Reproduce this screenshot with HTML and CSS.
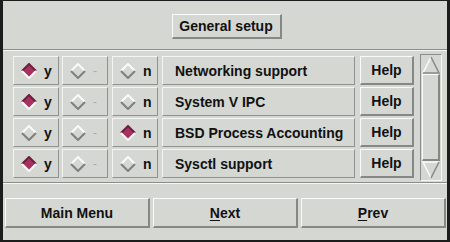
FILE: index.html
```html
<!DOCTYPE html>
<html lang="en">
<head>
    <meta charset="UTF-8">
    <title>General setup</title>
    <link rel="stylesheet" href="styles.css">
</head>
<body>
    <div class="window">
        <div class="header">
            <button class="btn title-btn">General setup</button>
        </div>
        <div class="separator"></div>
        <div class="main">
            <div class="rows">
                <div class="row">
                    <div class="cell opt"><svg class="dia" viewBox="0 0 16 16"><polygon class="on" points="8,1 15,8 8,15 1,8"/><polyline class="on-top" points="1,8 8,1 15,8"/><polyline class="on-bot" points="1,8 8,15 15,8"/></svg><span>y</span></div>
                    <div class="cell opt dim"><svg class="dia" viewBox="0 0 16 16"><polyline class="off-top" points="1,8 8,1 15,8"/><polyline class="off-bot" points="1,8 8,15 15,8"/></svg><span>-</span></div>
                    <div class="cell opt"><svg class="dia" viewBox="0 0 16 16"><polyline class="off-top" points="1,8 8,1 15,8"/><polyline class="off-bot" points="1,8 8,15 15,8"/></svg><span>n</span></div>
                    <div class="cell label">Networking support</div>
                    <button class="btn help">Help</button>
                </div>
                <div class="row">
                    <div class="cell opt"><svg class="dia" viewBox="0 0 16 16"><polygon class="on" points="8,1 15,8 8,15 1,8"/><polyline class="on-top" points="1,8 8,1 15,8"/><polyline class="on-bot" points="1,8 8,15 15,8"/></svg><span>y</span></div>
                    <div class="cell opt dim"><svg class="dia" viewBox="0 0 16 16"><polyline class="off-top" points="1,8 8,1 15,8"/><polyline class="off-bot" points="1,8 8,15 15,8"/></svg><span>-</span></div>
                    <div class="cell opt"><svg class="dia" viewBox="0 0 16 16"><polyline class="off-top" points="1,8 8,1 15,8"/><polyline class="off-bot" points="1,8 8,15 15,8"/></svg><span>n</span></div>
                    <div class="cell label">System V IPC</div>
                    <button class="btn help">Help</button>
                </div>
                <div class="row">
                    <div class="cell opt"><svg class="dia" viewBox="0 0 16 16"><polyline class="off-top" points="1,8 8,1 15,8"/><polyline class="off-bot" points="1,8 8,15 15,8"/></svg><span>y</span></div>
                    <div class="cell opt dim"><svg class="dia" viewBox="0 0 16 16"><polyline class="off-top" points="1,8 8,1 15,8"/><polyline class="off-bot" points="1,8 8,15 15,8"/></svg><span>-</span></div>
                    <div class="cell opt"><svg class="dia" viewBox="0 0 16 16"><polygon class="on" points="8,1 15,8 8,15 1,8"/><polyline class="on-top" points="1,8 8,1 15,8"/><polyline class="on-bot" points="1,8 8,15 15,8"/></svg><span>n</span></div>
                    <div class="cell label">BSD Process Accounting</div>
                    <button class="btn help">Help</button>
                </div>
                <div class="row">
                    <div class="cell opt"><svg class="dia" viewBox="0 0 16 16"><polygon class="on" points="8,1 15,8 8,15 1,8"/><polyline class="on-top" points="1,8 8,1 15,8"/><polyline class="on-bot" points="1,8 8,15 15,8"/></svg><span>y</span></div>
                    <div class="cell opt dim"><svg class="dia" viewBox="0 0 16 16"><polyline class="off-top" points="1,8 8,1 15,8"/><polyline class="off-bot" points="1,8 8,15 15,8"/></svg><span>-</span></div>
                    <div class="cell opt"><svg class="dia" viewBox="0 0 16 16"><polyline class="off-top" points="1,8 8,1 15,8"/><polyline class="off-bot" points="1,8 8,15 15,8"/></svg><span>n</span></div>
                    <div class="cell label">Sysctl support</div>
                    <button class="btn help">Help</button>
                </div>
            </div>
            <div class="scrollbar">
                <svg class="arrow" viewBox="0 0 18 18"><polygon points="9,1 17,17 1,17" fill="#d4d7d2"/><polyline points="1,17 9,1" stroke="#fafafa" stroke-width="1.5" fill="none"/><polyline points="9,1 17,17 1,17" stroke="#888" stroke-width="1.5" fill="none"/></svg>
                <div class="slider"></div>
                <svg class="arrow" viewBox="0 0 18 18"><polygon points="1,1 17,1 9,17" fill="#d4d7d2"/><polyline points="9,17 1,1 17,1" stroke="#fafafa" stroke-width="1.5" fill="none"/><polyline points="17,1 9,17" stroke="#888" stroke-width="1.5" fill="none"/></svg>
            </div>
        </div>
        <div class="separator"></div>
        <div class="footer">
            <button class="btn nav">Main Menu</button>
            <button class="btn nav"><u>N</u>ext</button>
            <button class="btn nav"><u>P</u>rev</button>
        </div>
    </div>
</body>
</html>
```

FILE: styles.css
```css
body {
    margin: 0;
    background-color: #d4d7d2;
    font-family: "Liberation Sans", Arial, sans-serif;
}
.window {
    width: 450px;
    height: 242px;
    box-sizing: border-box;
    border-style: solid;
    border-color: #1c1c1c;
    border-width: 1px 3px 2px 3px;
    background-color: #d4d7d2;
    display: flex;
    flex-direction: column;
}
.btn {
    font-family: "Liberation Sans", Arial, sans-serif;
    font-weight: bold;
    font-size: 14px;
    color: #111;
    background-color: #d4d7d2;
    border-style: solid;
    border-width: 1px 2px 2px 1px;
    border-color: #fafafa #858885 #858885 #fafafa;
    padding: 0;
    margin: 0;
}
.header {
    height: 48px;
    display: flex;
    justify-content: center;
    align-items: center;
    padding-left: 3px;
}
.title-btn {
    width: 110px;
    height: 25px;
    margin-top: 2px;
}
.separator {
    height: 0;
    border-top: 1px solid #8a8d8a;
    border-bottom: 1px solid #f6f6f6;
}
.main {
    display: flex;
    padding: 3px 7px 0 10px;
    height: 131px;
    box-sizing: border-box;
}
.rows {
    display: flex;
    flex-direction: column;
    gap: 2px;
    padding-top: 2px;
}
.row {
    display: flex;
    height: 29px;
}
.cell {
    box-sizing: border-box;
    height: 29px;
    border-style: solid;
    border-width: 1px;
    border-color: #f4f4f4 #8f928f #8f928f #f4f4f4;
    display: flex;
    align-items: center;
    font-weight: bold;
    font-size: 14px;
    color: #111;
}
.opt {
    width: 46px;
    margin-right: 3px;
    padding-left: 7px;
    gap: 7px;
}
.opt:nth-child(2) {
    margin-right: 4px;
}
.opt:nth-child(3) {
    margin-right: 4px;
}
.dim span {
    color: #a8aba8;
    font-weight: normal;
    font-size: 12px;
}
.dia {
    width: 16px;
    height: 16px;
}
.dia .on {
    fill: #a8325f;
}
.dia .on-top {
    fill: none;
    stroke: #6e1f3e;
    stroke-width: 2;
}
.dia .on-bot {
    fill: none;
    stroke: #fafafa;
    stroke-width: 2;
}
.dia .off-top {
    fill: none;
    stroke: #fafafa;
    stroke-width: 2;
}
.dia .off-bot {
    fill: none;
    stroke: #7d807d;
    stroke-width: 2;
}
.label {
    width: 193px;
    padding-left: 12px;
}
.help {
    width: 54px;
    height: 29px;
    margin-left: 5px;
}
.scrollbar {
    box-sizing: border-box;
    width: 22px;
    height: 127px;
    margin-left: 6px;
    border-style: solid;
    border-width: 1px;
    border-color: #8a8d8a #f6f6f6 #f6f6f6 #8a8d8a;
    display: flex;
    flex-direction: column;
    align-items: center;
    padding: 1px;
}
.arrow {
    width: 18px;
    height: 18px;
    flex: none;
}
.slider {
    flex: 1;
    width: 18px;
    box-sizing: border-box;
    border-style: solid;
    border-width: 1px 2px 2px 1px;
    border-color: #fafafa #858885 #858885 #fafafa;
}
.footer {
    display: flex;
    gap: 3px;
    padding: 14px 1px 0 2px;
}
.nav {
    flex: 1;
    height: 30px;
}
.nav u {
    text-decoration-thickness: 1px;
    text-underline-offset: 2px;
}
```
